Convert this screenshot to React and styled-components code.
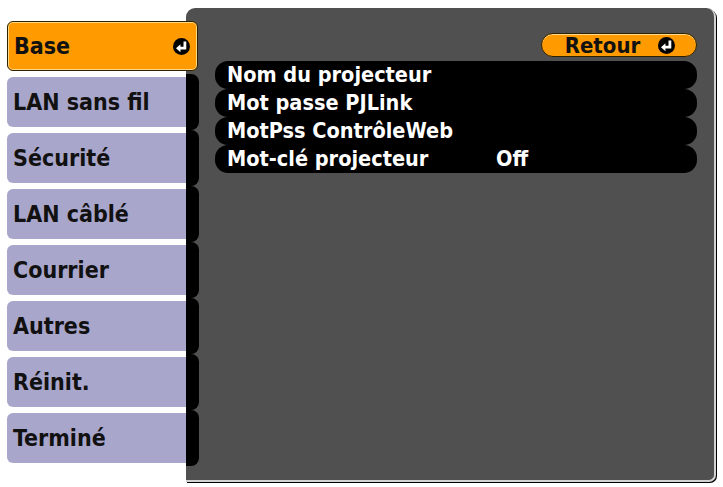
import styled, { createGlobalStyle } from 'styled-components'

const GlobalStyle = createGlobalStyle`
  body {
    margin: 0;
    background: #ffffff;
    font-family: "DejaVu Sans Condensed", "DejaVu Sans", sans-serif;
    font-stretch: condensed;
  }
`

const StyledScreen = styled.div`
  display: flex;
  align-items: flex-start;
  padding: 8px 0 0 7px;
  width: 723px;
  height: 487px;
  box-sizing: border-box;
`
const StyledSidebar = styled.div`
  position: relative;
  z-index: 1;
  display: flex;
  flex-direction: column;
  width: 192px;
  margin: 10px -13px 0 0;
`
const StyledTab = styled.div`
  display: flex;
  height: 56px;
`
const StyledTabLabel = styled.div`
  display: flex;
  align-items: center;
  justify-content: space-between;
  box-sizing: border-box;
  margin: 3px 0;
  width: ${(p) => (p.active ? '191px' : '179px')};
  height: 50px;
  padding: 0 7px 0 6px;
  background: ${(p) => (p.active ? '#ff9a00' : '#a9a6cb')};
  border: ${(p) => (p.active ? '1px solid #2e2300' : 'none')};
  border-radius: ${(p) => (p.active ? '6px' : '6px 0 0 6px')};
  box-shadow: ${(p) => (p.active ? 'inset 0 0 0 1px #ffd98a' : 'none')};
  color: #111111;
  font-size: 23px;
  font-weight: bold;
`
const StyledTail = styled.div`
  width: 13px;
  height: 56px;
  background: #000000;
  border-radius: 0 8px 8px 0;
`
const StyledPanel = styled.div`
  display: flex;
  flex-direction: column;
  align-items: flex-end;
  box-sizing: border-box;
  width: 530px;
  height: 474px;
  padding: 25px 17px 0 29px;
  background: #505050;
  border-right: 2px solid #d2d2d2;
  border-bottom: 2px solid #d2d2d2;
  border-radius: 9px 9px 7px 0;
  box-shadow: 1px 1px 0 #000000;
`
const StyledBackButton = styled.div`
  display: flex;
  align-items: center;
  justify-content: center;
  gap: 18px;
  box-sizing: border-box;
  width: 156px;
  height: 24px;
  padding-left: 2px;
  background: #ff9a00;
  border: 1px solid #2e2300;
  border-radius: 12px;
  box-shadow: inset 0 1px 0 #ffd98a;
  color: #111111;
  font-size: 22px;
  font-weight: bold;
`
const StyledList = styled.div`
  display: flex;
  flex-direction: column;
  align-self: stretch;
  margin-top: 4px;
`
const StyledRow = styled.div`
  display: grid;
  grid-template-columns: 269px 1fr;
  align-items: center;
  height: 28px;
  padding-left: 12px;
  background: #000000;
  border-radius: 13px;
  color: #ffffff;
  font-size: 21.5px;
  font-weight: bold;
  line-height: 26px;
  white-space: nowrap;
`

const EnterIcon = () => (
  <svg width='17' height='17' viewBox='0 0 16 16'>
    <circle cx='8' cy='8' r='8' fill='#000' />
    <path d='M11.2 3.2 V9.6 H6.2' fill='none' stroke='#fff' strokeWidth='2.6' />
    <path d='M2.8 9.6 L7 5.8 L7 13.4 Z' fill='#fff' />
  </svg>
)

const tabs = ['Base', 'LAN sans fil', 'Sécurité', 'LAN câblé', 'Courrier', 'Autres', 'Réinit.', 'Terminé']

const items = [
  { label: 'Nom du projecteur', value: '' },
  { label: 'Mot passe PJLink', value: '' },
  { label: 'MotPss ContrôleWeb', value: '' },
  { label: 'Mot-clé projecteur', value: 'Off' },
]

const App = () => {
  return (
    <StyledScreen>
      <GlobalStyle />
      <StyledSidebar>
        {tabs.map((tab, index) => {
          const active = index === 0
          return (
            <StyledTab key={tab}>
              <StyledTabLabel active={active}>
                {tab}
                {active && <EnterIcon />}
              </StyledTabLabel>
              {!active && <StyledTail />}
            </StyledTab>
          )
        })}
      </StyledSidebar>
      <StyledPanel>
        <StyledBackButton>
          Retour
          <EnterIcon />
        </StyledBackButton>
        <StyledList>
          {items.map((item) => (
            <StyledRow key={item.label}>
              <span>{item.label}</span>
              <span>{item.value}</span>
            </StyledRow>
          ))}
        </StyledList>
      </StyledPanel>
    </StyledScreen>
  )
}

export default App
